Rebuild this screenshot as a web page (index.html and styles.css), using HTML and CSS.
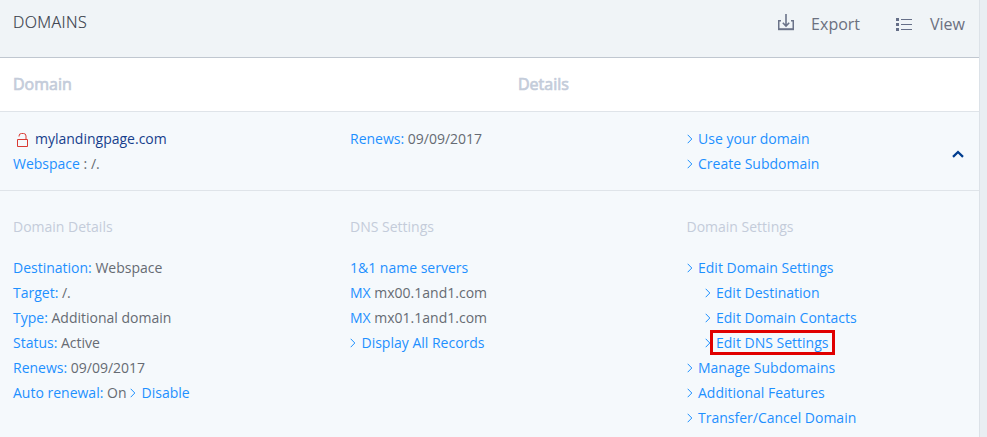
FILE: index.html
```html
<!DOCTYPE html>
<html lang="en">
<head>
<meta charset="utf-8">
<title>Domains</title>
<link rel="stylesheet" href="styles.css">
</head>
<body>
<svg class="defs" width="0" height="0"><symbol id="chev" viewBox="0 0 6 10"><path d="M.7 .8 4.8 5 .7 9.2" fill="none" stroke="currentColor" stroke-width="1"/></symbol></svg>
<main class="panel">
  <header class="toolbar">
    <h1>DOMAINS</h1>
    <div class="actions">
      <a class="action"><svg width="18" height="18" viewBox="0 0 18 18" fill="none" stroke="#6b7389"><path d="M4 6.75H1.75V15.9M14 6.75h2.25V15.9" stroke-width="1.5"/><path d="M1 15.2h16" stroke-width="2"/><path d="M9 0v12M5.8 8.8 9 12l3.2-3.2" stroke-width="1.6"/></svg><span>Export</span></a>
      <a class="action view"><svg width="16" height="14" viewBox="0 0 16 14" fill="#666f88"><path d="M0 0h3v3H0zM0 5h3v3H0zM0 10h3v3H0zM5 1h11v1H5zM5 6h11v1H5zM5 11h11v1H5z"/></svg><span>View</span></a>
    </div>
  </header>
  <div class="heads"><span>Domain</span><span>Details</span></div>
  <section class="row summary">
    <div>
      <p><svg class="lock" width="11" height="14" viewBox="0 0 11 14" fill="none" stroke="#d93a32"><path d="M.5 6.5h10v7H.5z"/><path d="M2 3.5V3Q2 .5 4.5 .5h2Q9 .5 9 3v3.5"/></svg><a class="name">mylandingpage.com</a></p>
      <p><a>Webspace</a> : /.</p>
    </div>
    <div><p><a>Renews:</a> 09/09/2017</p></div>
    <div>
      <p><a><svg class="chev"><use href="#chev"/></svg>Use your domain</a></p>
      <p><a><svg class="chev"><use href="#chev"/></svg>Create Subdomain</a></p>
    </div>
    <svg class="toggle" width="12" height="8" viewBox="0 0 12 8"><path d="M1 6.8 6 2l5 4.8" fill="none" stroke="#003d8f" stroke-width="2.3"/></svg>
  </section>
  <section class="row details">
    <div>
      <h2>Domain Details</h2>
      <p><a>Destination:</a> Webspace</p>
      <p><a>Target:</a> /.</p>
      <p><a>Type:</a> Additional domain</p>
      <p><a>Status:</a> Active</p>
      <p><a>Renews:</a> 09/09/2017</p>
      <p><a>Auto renewal:</a> On <a><svg class="chev"><use href="#chev"/></svg>Disable</a></p>
    </div>
    <div>
      <h2>DNS Settings</h2>
      <p><a>1&amp;1 name servers</a></p>
      <p><a>MX</a> mx00.1and1.com</p>
      <p><a>MX</a> mx01.1and1.com</p>
      <p><a><svg class="chev"><use href="#chev"/></svg>Display All Records</a></p>
    </div>
    <div>
      <h2>Domain Settings</h2>
      <p><a><svg class="chev"><use href="#chev"/></svg>Edit Domain Settings</a></p>
      <p class="sub"><a><svg class="chev"><use href="#chev"/></svg>Edit Destination</a></p>
      <p class="sub"><a><svg class="chev"><use href="#chev"/></svg>Edit Domain Contacts</a></p>
      <p class="sub"><a><svg class="chev"><use href="#chev"/></svg><span class="marked">Edit DNS Settings</span></a></p>
      <p><a><svg class="chev"><use href="#chev"/></svg>Manage Subdomains</a></p>
      <p><a><svg class="chev"><use href="#chev"/></svg>Additional Features</a></p>
      <p><a><svg class="chev"><use href="#chev"/></svg>Transfer/Cancel Domain</a></p>
    </div>
  </section>
</main>
</body>
</html>
```
FILE: styles.css
```css
* { box-sizing: border-box; }
body {
  margin: 0;
  height: 437px;
  overflow: hidden;
  background: #e9eef2;
  font: 14px/25px "Open Sans", sans-serif;
  color: #666b73;
}
.defs { position: absolute; }
h1, h2, p { margin: 0; font-weight: 400; }
p { white-space: nowrap; height: 25px; }
a { color: #1e90ff; }
.panel {
  width: 980px;
  height: 437px;
  background: #f5f9fc;
  border-right: 1px solid #dce2e8;
}
.toolbar {
  display: flex;
  justify-content: space-between;
  height: 58px;
  padding: 10px 14px 0 13px;
  background: #f0f4f7;
  border-bottom: 1px solid #c0c7d0;
}
h1 { font-size: 16px; color: #353a47; font-weight: 300; letter-spacing: .4px; -webkit-text-stroke: .2px #353a47; }
.actions { display: flex; gap: 36px; padding-top: 2px; }
.action { display: flex; gap: 16px; font-size: 16px; color: #6b7080; }
.action.view { gap: 18px; }
.action svg { margin-top: 2px; }
.action.view svg { margin-top: 6px; }
.heads {
  display: grid;
  grid-template-columns: 505px 1fr;
  height: 54px;
  padding: 14px 13px 0;
  background: #fff;
  border-bottom: 1px solid #dfe4e9;
  font-size: 16px;
  color: #c4ccda;
  -webkit-text-stroke: .7px #c4ccda;
}
.row {
  display: grid;
  grid-template-columns: 337px 336.5px 1fr auto;
  padding: 14px 15px 0 13px;
}
.summary { height: 79px; border-bottom: 1px solid #dfe4e9; }
.details { padding-top: 23px; }
.name { color: #173f8c; }
.lock { margin: 0 7px 0 4px; vertical-align: -3px; }
.toggle { margin-top: 24px; }
h2 { font-size: 14px; color: #c4ccda; margin-bottom: 16px; }
.chev { width: 6px; height: 10px; margin-right: 5.5px; vertical-align: 0; }
.sub { padding-left: 18px; }
.marked { position: relative; }
.marked::after {
  content: "";
  position: absolute;
  inset: -3px -7px -3px -6px;
  border: 3px solid #e00000;
}
```
